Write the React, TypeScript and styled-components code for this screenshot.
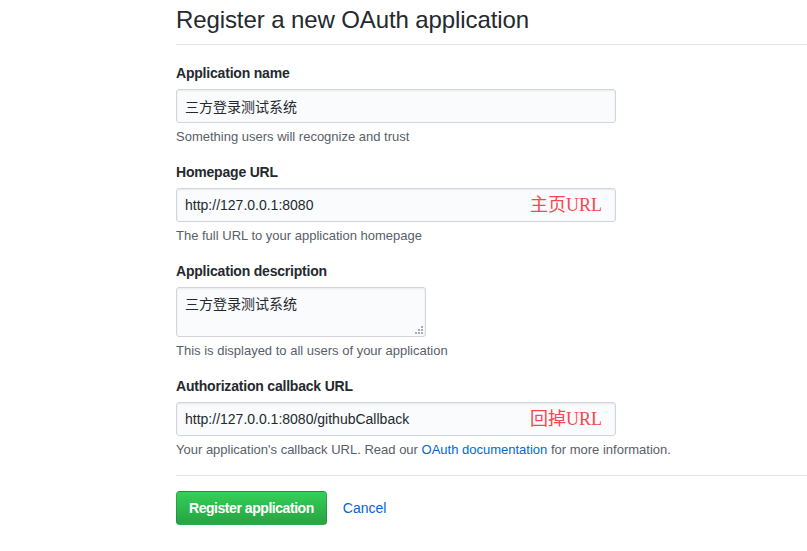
import React from "react";
import styled, { createGlobalStyle } from "styled-components";

const GlobalStyle = createGlobalStyle`
  html, body {
    margin: 0;
    padding: 0;
    background: #fff;
  }
  body {
    font-family: "Liberation Sans", "Noto Sans CJK SC", sans-serif;
    font-size: 14px;
    color: #24292e;
  }
`;

const Page = styled.div`
  padding: 2px 0 0 176px;
`;

const Header = styled.div`
  border-bottom: 1px solid #e1e4e8;
  padding-bottom: 6px;
`;

const Title = styled.h2`
  margin: 0;
  font-size: 24px;
  font-weight: 400;
  line-height: 36px;
  letter-spacing: -0.1px;
  color: #24292e;
`;

const Form = styled.form`
  padding-top: 18px;
`;

const FormGroup = styled.div`
  width: 440px;
  & + & {
    margin-top: 16px;
  }
`;

const Label = styled.label`
  display: block;
  font-size: 14px;
  font-weight: 700;
  line-height: 21px;
  letter-spacing: -0.2px;
  margin-bottom: 5px;
`;

const InputWrap = styled.div`
  position: relative;
  width: 440px;
`;

const Input = styled.input`
  box-sizing: border-box;
  display: block;
  width: 440px;
  height: 34px;
  padding: 6px 8px;
  font-family: inherit;
  font-size: 14px;
  line-height: 20px;
  color: #24292e;
  background: #fafbfc;
  border: 1px solid #d1d5da;
  border-radius: 3px;
  box-shadow: inset 0 1px 2px rgba(27, 31, 35, 0.075);
  outline: none;
`;

const Annotation = styled.span`
  position: absolute;
  right: 14px;
  top: 50%;
  transform: translateY(-50%);
  font-family: "Liberation Serif", "Noto Sans CJK SC", serif;
  font-size: 18px;
  line-height: 20px;
  color: #f5474c;
  pointer-events: none;
`;

const TextareaWrap = styled.div`
  position: relative;
  width: 250px;
  height: 50px;
`;

const Textarea = styled.textarea`
  box-sizing: border-box;
  display: block;
  width: 250px;
  height: 50px;
  padding: 6px 8px;
  font-family: inherit;
  font-size: 14px;
  line-height: 20px;
  color: #24292e;
  background: #fafbfc;
  border: 1px solid #d1d5da;
  border-radius: 3px;
  box-shadow: inset 0 1px 2px rgba(27, 31, 35, 0.075);
  resize: none;
  outline: none;
`;

const Grip = styled.svg`
  position: absolute;
  right: 3px;
  bottom: 3px;
  width: 8px;
  height: 8px;
  fill: #a8adb3;
`;

const Note = styled.p`
  margin: 5px 0 0;
  font-size: 13px;
  line-height: 18px;
  color: #586069;
  white-space: nowrap;
`;

const Link = styled.a`
  color: #0366d6;
  text-decoration: none;
`;

const Actions = styled.div`
  margin-top: 16px;
  padding-top: 15px;
  border-top: 1px solid #e1e4e8;
  display: flex;
  align-items: center;
  gap: 16px;
  font-size: 14px;
`;

const PrimaryButton = styled.button`
  height: 34px;
  padding: 0 12px;
  font-family: inherit;
  font-size: 14px;
  font-weight: 700;
  letter-spacing: -0.45px;
  color: #fff;
  background-image: linear-gradient(-180deg, #34d058 0%, #28a745 90%);
  border: 1px solid rgba(27, 31, 35, 0.2);
  border-radius: 4px;
  cursor: pointer;
`;

type Field = {
  label: string;
  value: string;
  note: React.ReactNode;
  multiline?: boolean;
  annotation?: string;
};

const fields: Field[] = [
  {
    label: "Application name",
    value: "三方登录测试系统",
    note: "Something users will recognize and trust",
  },
  {
    label: "Homepage URL",
    value: "http://127.0.0.1:8080",
    note: "The full URL to your application homepage",
    annotation: "主页URL",
  },
  {
    label: "Application description",
    value: "三方登录测试系统",
    note: "This is displayed to all users of your application",
    multiline: true,
  },
  {
    label: "Authorization callback URL",
    value: "http://127.0.0.1:8080/githubCallback",
    note: (
      <>
        Your application's callback URL. Read our{" "}
        <Link href="#">OAuth documentation</Link> for more information.
      </>
    ),
    annotation: "回掉URL",
  },
];

export default function App() {
  return (
    <Page>
      <GlobalStyle />
      <Header>
        <Title>Register a new OAuth application</Title>
      </Header>
      <Form onSubmit={e => e.preventDefault()}>
        {fields.map(field => (
          <FormGroup key={field.label}>
            <Label>{field.label}</Label>
            {field.multiline ? (
              <TextareaWrap>
                <Textarea readOnly defaultValue={field.value} />
                <Grip viewBox="0 0 8 8">
                  <rect x="6" y="0" width="2" height="2" />
                  <rect x="3" y="3" width="2" height="2" />
                  <rect x="6" y="3" width="2" height="2" />
                  <rect x="0" y="6" width="2" height="2" />
                  <rect x="3" y="6" width="2" height="2" />
                  <rect x="6" y="6" width="2" height="2" />
                </Grip>
              </TextareaWrap>
            ) : (
              <InputWrap>
                <Input readOnly defaultValue={field.value} />
                {field.annotation && <Annotation>{field.annotation}</Annotation>}
              </InputWrap>
            )}
            <Note>{field.note}</Note>
          </FormGroup>
        ))}
        <Actions>
          <PrimaryButton type="submit">Register application</PrimaryButton>
          <Link href="#">Cancel</Link>
        </Actions>
      </Form>
    </Page>
  );
}
